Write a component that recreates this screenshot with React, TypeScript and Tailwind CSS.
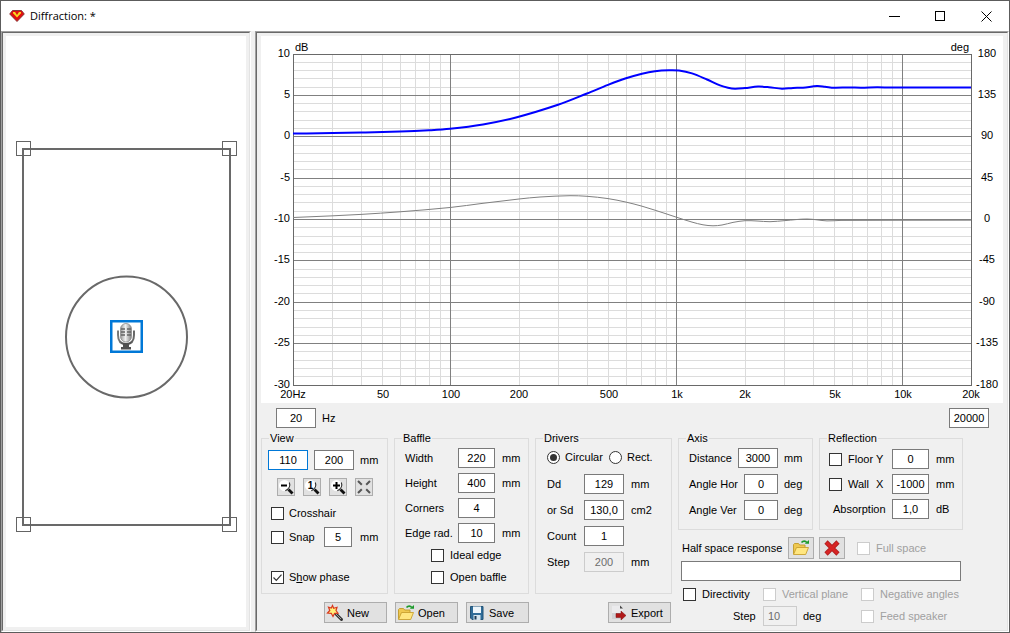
import type { ReactNode } from "react";
import clsx from "clsx";

type Point = [number, number];

const PLOT = { left: 32, right: 710, top: 18, bottom: 349 };

const LEVEL: Point[] = [
  [32, 97.5], [72, 97.1], [100, 96.6], [139, 95.6], [168, 94.3], [189, 92.8], [222, 88.4], [255, 81.5],
  [297, 68.8], [326, 57.5], [347, 48.9], [365, 42.3], [381, 37.7], [394, 35.2], [408, 34.2], [418, 34.5],
  [431, 37.4], [446, 43.5], [459, 49.4], [467, 51.8], [474, 52.7], [484, 52], [497, 50.6], [508, 51.2],
  [521, 52.7], [532, 51.9], [542, 51.7], [556, 50.1], [564, 50.7], [573, 51.7], [588, 51.4], [600, 51.7],
  [616, 51.3], [630, 51.5], [710, 51.5],
];

const PHASE: Point[] = [
  [32, 181.5], [72, 179.8], [100, 178.4], [139, 175.8], [189, 171.5], [222, 167.3], [258, 163],
  [279, 161], [309, 159.7], [326, 160.3], [347, 162.6], [365, 166.1], [381, 170.2], [394, 174.2],
  [406, 178.1], [416, 181.4], [431, 186.1], [442, 188.8], [452, 189.8], [461, 189], [472, 186.4],
  [484, 184.7], [496, 185], [509, 185.7], [524, 184.6], [546, 183], [566, 184.9], [580, 184.4], [710, 184.2],
];

const FREQ_LABELS: [number, string][] = [
  [20, "20Hz"], [50, "50"], [100, "100"], [200, "200"], [500, "500"],
  [1000, "1k"], [2000, "2k"], [5000, "5k"], [10000, "10k"], [20000, "20k"],
];

const FREQ_LINES = [
  30, 40, 50, 60, 70, 80, 90, 100, 200, 300, 400, 500, 600, 700, 800, 900,
  1000, 2000, 3000, 4000, 5000, 6000, 7000, 8000, 9000, 10000,
];

function freqX(f: number) {
  return PLOT.left + ((PLOT.right - PLOT.left) * Math.log10(f / 20)) / 3;
}

function levelY(db: number) {
  return PLOT.top + ((10 - db) * (PLOT.bottom - PLOT.top)) / 40;
}

// Catmull-Rom spline through all the points
function smooth(points: Point[]) {
  let d = `M${points[0][0]} ${points[0][1]}`;
  for (let i = 0; i < points.length - 1; i++) {
    const p0 = points[i - 1] ?? points[i];
    const p1 = points[i];
    const p2 = points[i + 1];
    const p3 = points[i + 2] ?? p2;
    const t = (p2[0] - p1[0]) / 3;
    const m1 = (p2[1] - p0[1]) / (p2[0] - p0[0]);
    const m2 = (p3[1] - p1[1]) / (p3[0] - p1[0]);
    d += `C${p1[0] + t} ${p1[1] + m1 * t} ${p2[0] - t} ${p2[1] - m2 * t} ${p2[0]} ${p2[1]}`;
  }
  return d;
}

function Chart() {
  const rows = Array.from({ length: 39 }, (_, i) => 9 - i);
  const isMajorFreq = (f: number) => f === 100 || f === 1000 || f === 10000;

  return (
    <svg viewBox="0 0 742 367" className="block w-full bg-white text-[11px]" role="img" aria-label="Diffraction response">
      <g shapeRendering="crispEdges" strokeWidth="1">
        {rows.filter((db) => db % 5 !== 0).map((db) => (
          <path key={db} d={`M${PLOT.left} ${Math.floor(levelY(db)) + 0.5}H${PLOT.right}`} stroke="#dcdcdc" />
        ))}
        {FREQ_LINES.filter((f) => !isMajorFreq(f)).map((f) => (
          <path key={f} d={`M${Math.floor(freqX(f)) + 0.5} ${PLOT.top}V${PLOT.bottom}`} stroke="#dcdcdc" />
        ))}
        {rows.filter((db) => db % 5 === 0).map((db) => (
          <path key={db} d={`M${PLOT.left} ${Math.floor(levelY(db)) + 0.5}H${PLOT.right}`} stroke="#808080" />
        ))}
        {FREQ_LINES.filter(isMajorFreq).map((f) => (
          <path key={f} d={`M${Math.floor(freqX(f)) + 0.5} ${PLOT.top}V${PLOT.bottom}`} stroke="#808080" />
        ))}
        <rect x="32.5" y="18.5" width="678" height="331" fill="none" stroke="#696969" />
      </g>

      <path d={smooth(PHASE)} fill="none" stroke="#808080" strokeWidth="1" />
      <path d={smooth(LEVEL)} fill="none" stroke="#0000ff" strokeWidth="2" />

      <g>
        <text x="34" y="15">dB</text>
        <text x="708" y="15" textAnchor="end">deg</text>
        {[10, 5, 0, -5, -10, -15, -20, -25, -30].map((db, i) => (
          <g key={db}>
            <text x="29" y={Math.floor(levelY(db)) + 3} textAnchor="end">{db}</text>
            <text x="726" y={Math.floor(levelY(db)) + 3} textAnchor="middle">{180 - i * 45}</text>
          </g>
        ))}
        {FREQ_LABELS.map(([f, label]) => (
          <text key={f} x={Math.round(freqX(f))} y="362" textAnchor="middle">{label}</text>
        ))}
      </g>
    </svg>
  );
}

function BaffleView() {
  const corners: Point[] = [[10, 105], [216, 105], [10, 481], [216, 481]];

  return (
    <svg viewBox="0 0 240 591" className="block w-full bg-white" role="img" aria-label="Baffle layout">
      <defs>
        <linearGradient id="capsule" x1="0" x2="1">
          <stop offset="0" stopColor="#989898" />
          <stop offset="0.45" stopColor="#f2f2f2" />
          <stop offset="1" stopColor="#808080" />
        </linearGradient>
        <linearGradient id="stand" x1="0" x2="1">
          <stop offset="0" stopColor="#7c7c7c" />
          <stop offset="0.5" stopColor="#3a3a3a" />
          <stop offset="1" stopColor="#6a6a6a" />
        </linearGradient>
      </defs>
      <rect x="17" y="113" width="207" height="376" fill="none" stroke="#696969" strokeWidth="2" />
      {corners.map(([x, y]) => (
        <rect key={`${x}-${y}`} x={x + 0.5} y={y + 0.5} width="14" height="14" fill="none" stroke="#646464" />
      ))}
      <circle cx="120.5" cy="301" r="60.5" fill="none" stroke="#696969" strokeWidth="2" />
      <rect x="105.25" y="285.25" width="30.5" height="30.5" fill="white" stroke="#0078d7" strokeWidth="2.5" />
      <path d="M112 294.500v4.500c0 6 3 9 8 9s8-3 8-9v-4.500" fill="none" stroke="url(#stand)" strokeWidth="2" />
      <path d="M117 307h6v4h2v2.500h-10V311h2z" fill="#505050" />
      <rect x="114.500" y="287.500" width="11" height="18.500" rx="5.500" fill="url(#capsule)" stroke="#8c8c8c" strokeWidth="0.800" />
      <path d="M115 293h4M121 293h4M115 296h4M121 296h4M115 299h4M121 299h4" stroke="#666666" strokeWidth="1.300" />
    </svg>
  );
}

function Gem() {
  return (
    <svg width="16" height="14" viewBox="0 0 16 14" aria-hidden="true">
      <path d="M3.500 1.500h9L15.300 5 8 12.500 0.700 5z" fill="#e01010" stroke="#7c3030" strokeWidth="0.900" />
      <path d="M4 3h8v1.200L9.800 6.500 8 8.500 6.200 6.500 4 4.200z" fill="#f8d820" />
      <path d="M6 3h4L8 6z" fill="#e01010" />
    </svg>
  );
}

function ZoomIcon({ mark }: { mark: "-" | "1" | "+" }) {
  return (
    <svg width="16" height="16" viewBox="0 0 16 16" aria-hidden="true">
      <circle cx="6.500" cy="6.500" r="5.500" fill="white" />
      <path d="M11.300 3.500c1.200 3 0 6.500-4 8.300" fill="none" stroke="#333333" strokeWidth="1.200" />
      <path d="M10.500 10.500l4 4" stroke="#111111" strokeWidth="2.800" />
      {mark === "-" && <path d="M3 6.500h6" stroke="black" strokeWidth="2" />}
      {mark === "+" && <path d="M3 6.500h7M6.500 3v7" stroke="black" strokeWidth="2" />}
      {mark === "1" && <text x="6.500" y="10" textAnchor="middle" fontSize="10" fontWeight="700">1</text>}
    </svg>
  );
}

function FitIcon() {
  return (
    <svg width="16" height="16" viewBox="0 0 16 16" stroke="#555555" strokeWidth="2" aria-hidden="true">
      <path d="M2 2l3.800 3.800M14 2l-3.800 3.800M2 14l3.800-3.800M14 14l-3.800-3.800" />
    </svg>
  );
}

function WandIcon() {
  return (
    <svg width="18" height="18" viewBox="0 0 18 18" aria-hidden="true">
      <path d="M9.500 9.500l6 6" stroke="#333333" strokeWidth="3" strokeLinecap="round" />
      <path d="M9.500 9.500l5.500 5.500" stroke="#a0a0a0" strokeWidth="1" />
      <path d="M6.500 1.500l1.200 2.800 3.300-1-1 3.200 2 2.600-3.400.2L7 12.500 5.300 9.300 1.500 9l2.300-2.500L2.500 3.200l2.800.9z" fill="#fff07a" stroke="#d9381e" strokeWidth="1.200" />
    </svg>
  );
}

function FolderIcon() {
  return (
    <svg width="18" height="18" viewBox="0 0 18 18" aria-hidden="true">
      <path d="M1.500 15V5.500l1-1h4l1.200 1.500H13v3" fill="#efc850" stroke="#c09a28" strokeWidth="0.900" />
      <path d="M1.500 15.500l3-7h12l-2.800 7z" fill="#ffe680" stroke="#c8a030" strokeWidth="0.900" />
      <path d="M9.500 3.500c1.500-1.800 4-1.800 5.300 0" fill="none" stroke="#1d9a2c" strokeWidth="1.600" />
      <path d="M12.800 4.800h4.200V1z" fill="#1d9a2c" />
    </svg>
  );
}

function DiskIcon() {
  return (
    <svg width="18" height="18" viewBox="-1 -1 18 18" aria-hidden="true">
      <path d="M1.500 1.500h12.500v13h-11l-1.500-1.500z" fill="#2f6c98" stroke="#235478" />
      <rect x="4" y="1.500" width="8" height="6.500" fill="#eef6fb" />
      <rect x="4.500" y="10" width="7" height="5" fill="#d5e5ee" />
      <rect x="5.500" y="11" width="2" height="3.500" fill="#1c3c58" />
    </svg>
  );
}

function ExportIcon() {
  return (
    <svg width="18" height="18" viewBox="-1 -1 18 18" aria-hidden="true">
      <path d="M1 0.500h8l3 3V14H1z" fill="#d0d0d4" />
      <path d="M1 0.500h8l3 3V8H1z" fill="#ebebed" />
      <path d="M9 0.500v3h3z" fill="#444444" />
      <path d="M5 8.500h5V6l5 4.500-5 4.500v-2.500H5z" fill="#b01818" stroke="#7c1010" strokeWidth="0.500" />
    </svg>
  );
}

function DeleteIcon() {
  return (
    <svg width="18" height="18" viewBox="0 0 18 18" aria-hidden="true">
      <path d="M3 3l12 12M15 3L3 15" stroke="#b02020" strokeWidth="4.600" />
      <path d="M3.500 3.500l11 11M14.500 3.500l-11 11" stroke="#d82424" strokeWidth="3" />
    </svg>
  );
}

function Field({ label, value, width, className, disabled }: {
  label: string;
  value: string;
  width: string;
  className?: string;
  disabled?: boolean;
}) {
  return (
    <input
      type="text"
      aria-label={label}
      defaultValue={value}
      disabled={disabled}
      className={clsx(
        "h-5 shrink-0 border text-center outline-none",
        width,
        disabled ? "border-[#cccccc] bg-[#f0f0f0] text-[#6d6d6d]" : "bg-white",
        className ?? (!disabled && "border-[#7a7a7a]"),
      )}
    />
  );
}

function Check({ children, checked, disabled, gap = "gap-[6px]" }: {
  children: ReactNode;
  checked?: boolean;
  disabled?: boolean;
  gap?: string;
}) {
  return (
    <label className={clsx("flex items-center leading-[13px] whitespace-nowrap", gap, disabled && "text-[#a0a0a0]")}>
      <span className="relative block size-[13px] shrink-0">
        <input
          type="checkbox"
          defaultChecked={checked}
          disabled={disabled}
          className="peer block size-[13px] appearance-none border border-[#333333] bg-white disabled:border-[#cccccc]"
        />
        <svg viewBox="0 0 13 13" className="pointer-events-none absolute inset-0 hidden peer-checked:block" aria-hidden="true">
          <path d="M2.500 6.500l2.800 2.800 5.200-5.600" fill="none" stroke="#333333" strokeWidth="1.200" />
        </svg>
      </span>
      <span>{children}</span>
    </label>
  );
}

function Radio({ children, checked }: { children: ReactNode; checked?: boolean }) {
  return (
    <label className="flex items-center gap-[5px] leading-[13px]">
      <span className="relative block size-[13px]">
        <input
          type="radio"
          name="shape"
          defaultChecked={checked}
          className="peer block size-[13px] appearance-none rounded-full border border-[#333333] bg-white"
        />
        <span className="pointer-events-none absolute inset-[3px] hidden rounded-full bg-[#333333] peer-checked:block" />
      </span>
      {children}
    </label>
  );
}

function Group({ title, className, children }: { title: string; className: string; children: ReactNode }) {
  return (
    <fieldset className={clsx("min-w-0 shrink-0 border border-[#dcdcdc]", className)}>
      <legend className="ml-[7px] px-px leading-[13px]">{title}</legend>
      {children}
    </fieldset>
  );
}

function ActionButton({ icon, children }: { icon: ReactNode; children: ReactNode }) {
  return (
    <button type="button" className="flex h-[21px] w-[63px] items-center gap-[3px] border border-[#adadad] bg-[#e1e1e1] pl-px">
      {icon}
      <span>{children}</span>
    </button>
  );
}

function IconButton({ label, className, children }: { label: string; className: string; children: ReactNode }) {
  return (
    <button type="button" aria-label={label} className={clsx("grid place-items-center border border-[#adadad] bg-[#e1e1e1]", className)}>
      {children}
    </button>
  );
}

function TitleBar() {
  return (
    <header className="flex h-[30px] shrink-0 items-center bg-white">
      <div className="flex flex-1 items-center gap-[5px] pl-2">
        <Gem />
        <h1 className="font-['Open_Sans',sans-serif] text-[11px]">Diffraction: *</h1>
      </div>
      <button type="button" aria-label="Minimize" className="grid h-full w-[46px] place-items-center">
        <svg width="11" height="11" viewBox="0 0 11 11" stroke="black" shapeRendering="crispEdges"><path d="M0 5.500h11" /></svg>
      </button>
      <button type="button" aria-label="Maximize" className="grid h-full w-[46px] place-items-center">
        <svg width="11" height="11" viewBox="0 0 11 11" stroke="black" fill="none" shapeRendering="crispEdges"><path d="M0.500 0.500h9v9H0.500z" /></svg>
      </button>
      <button type="button" aria-label="Close" className="grid h-full w-[46px] place-items-center">
        <svg width="11" height="11" viewBox="0 0 11 11" stroke="black"><path d="M0.500 0.500l10 10M10.500 0.500l-10 10" /></svg>
      </button>
    </header>
  );
}

function Pane({ className, children }: { className: string; children: ReactNode }) {
  return (
    <div className={clsx("flex border border-t-[#a0a0a0] border-r-white border-b-white border-l-[#a0a0a0]", className)}>
      <div className="flex min-w-0 flex-1 flex-col border border-t-[#696969] border-r-[#e3e3e3] border-b-[#e3e3e3] border-l-[#696969]">
        {children}
      </div>
    </div>
  );
}

function Controls() {
  return (
    <div className="flex gap-[6px]">
      <div className="flex shrink-0 flex-col gap-2">
        <div className="flex gap-[6px]">
          <Group title="View" className="h-[162px] w-[127px]">
            <div className="flex items-center gap-[6px] pt-[5px] pl-[6px]">
              <Field label="View width" value="110" width="w-10" className="border-[#0078d7]" />
              <Field label="View height" value="200" width="w-10" />
              <span>mm</span>
            </div>
            <div className="mt-2 flex gap-2 pl-[15px]">
              <IconButton label="Zoom out" className="size-[18px]"><ZoomIcon mark="-" /></IconButton>
              <IconButton label="Actual size" className="size-[18px]"><ZoomIcon mark="1" /></IconButton>
              <IconButton label="Zoom in" className="size-[18px]"><ZoomIcon mark="+" /></IconButton>
              <IconButton label="Fit" className="size-[18px]"><FitIcon /></IconButton>
            </div>
            <div className="mt-[11px] pl-[9px]"><Check gap="gap-[5px]">Crosshair</Check></div>
            <div className="mt-[7px] flex items-center pl-[9px]">
              <div className="w-[53px]"><Check gap="gap-[5px]">Snap</Check></div>
              <Field label="Snap step" value="5" width="w-7" />
              <span className="ml-2">mm</span>
            </div>
            <div className="mt-6 pl-[9px]"><Check gap="gap-[5px]" checked>S<u>h</u>ow phase</Check></div>
          </Group>

          <Group title="Baffle" className="h-[162px] w-[135px]">
            <div className="grid grid-cols-[53px_37px_auto] items-center gap-y-[5px] pt-[3px] pl-[10px]">
              <span>Width</span><Field label="Width" value="220" width="w-full" /><span className="ml-[7px]">mm</span>
              <span>Height</span><Field label="Height" value="400" width="w-full" /><span className="ml-[7px]">mm</span>
              <span>Corners</span><Field label="Corners" value="4" width="w-full" /><span />
              <span>Edge rad.</span><Field label="Edge radius" value="10" width="w-full" /><span className="ml-[7px]">mm</span>
            </div>
            <div className="mt-[6px] flex flex-col gap-[9px] pl-9">
              <Check>Ideal edge</Check>
              <Check>Open baffle</Check>
            </div>
          </Group>

          <Group title="Drivers" className="h-[162px] w-[137px]">
            <div className="flex pt-[6px] pl-[11px]">
              <div className="w-[62px]"><Radio checked>Circular</Radio></div>
              <Radio>Rect.</Radio>
            </div>
            <div className="mt-[10px] grid grid-cols-[37px_40px_auto] items-center gap-y-[6px] pl-[11px]">
              <span>Dd</span><Field label="Dd" value="129" width="w-full" /><span className="ml-[7px]">mm</span>
              <span>or Sd</span><Field label="Sd" value="130,0" width="w-full" /><span className="ml-[7px]">cm2</span>
              <span>Count</span><Field label="Count" value="1" width="w-full" /><span />
              <span>Step</span><Field label="Driver step" value="200" width="w-full" disabled /><span className="ml-[7px]">mm</span>
            </div>
          </Group>
        </div>

        <div className="flex items-center gap-2 pl-[63px]">
          <ActionButton icon={<WandIcon />}>New</ActionButton>
          <ActionButton icon={<FolderIcon />}>Open</ActionButton>
          <ActionButton icon={<DiskIcon />}>Save</ActionButton>
          <div className="ml-auto pr-px"><ActionButton icon={<ExportIcon />}>Export</ActionButton></div>
        </div>
      </div>

      <div className="flex w-[285px] shrink-0 flex-col">
        <div className="flex gap-[6px]">
          <Group title="Axis" className="h-[98px] w-[135px]">
            <div className="flex flex-col gap-[6px] pt-[3px] pr-[6px] pl-[10px]">
              <div className="flex items-center">
                <span className="flex-1">Distance</span><Field label="Distance" value="3000" width="w-10" /><span className="w-7 pl-[6px]">mm</span>
              </div>
              <div className="flex items-center">
                <span className="flex-1">Angle Hor</span><Field label="Angle Hor" value="0" width="w-[34px]" /><span className="w-7 pl-[6px]">deg</span>
              </div>
              <div className="flex items-center">
                <span className="flex-1">Angle Ver</span><Field label="Angle Ver" value="0" width="w-[34px]" /><span className="w-7 pl-[6px]">deg</span>
              </div>
            </div>
          </Group>

          <Group title="Reflection" className="h-[98px] w-[144px]">
            <div className="grid grid-cols-[63px_37px_auto] items-center gap-y-[5px] pt-1 pl-[9px]">
              <Check><span className="flex"><span className="w-7">Floor</span>Y</span></Check>
              <Field label="Floor Y" value="0" width="w-full" /><span className="ml-[7px]">mm</span>
              <Check><span className="flex"><span className="w-7">Wall</span>X</span></Check>
              <Field label="Wall X" value="-1000" width="w-full" /><span className="ml-[7px]">mm</span>
              <span className="pl-1">Absorption</span>
              <Field label="Absorption" value="1,0" width="w-full" /><span className="ml-[7px]">dB</span>
            </div>
          </Group>
        </div>

        <div className="mt-[7px] flex items-center pl-1">
          <span className="w-[106px]">Half space response</span>
          <IconButton label="Open response" className="h-[22px] w-[26px]"><FolderIcon /></IconButton>
          <IconButton label="Clear response" className="ml-[5px] h-[22px] w-[26px]"><DeleteIcon /></IconButton>
          <div className="ml-3"><Check disabled>Full space</Check></div>
        </div>
        <div className="mt-[2px] flex pr-[2px] pl-[3px]">
          <input type="text" aria-label="Half space response" className="h-5 w-full border border-[#7a7a7a] bg-white px-1 outline-none" />
        </div>
        <div className="mt-[7px] flex pl-[5px]">
          <div className="w-20"><Check>Directivity</Check></div>
          <div className="w-[98px]"><Check disabled>Vertical plane</Check></div>
          <Check disabled>Negative angles</Check>
        </div>
        <div className="mt-[5px] flex items-center pl-[55px]">
          <span className="w-[30px]">Step</span>
          <Field label="Directivity step" value="10" width="w-[34px]" className="border-[#cccccc] pr-3" disabled />
          <span className="w-16 pl-[6px]">deg</span>
          <Check disabled>Feed speaker</Check>
        </div>
      </div>
    </div>
  );
}

export default function App() {
  return (
    <div className="flex min-h-screen w-full flex-col border border-[#5c5c5c] bg-[#f0f0f0] font-['Liberation_Sans',Arial,sans-serif] text-[11px] leading-4 text-black">
      <TitleBar />
      <main className="flex flex-1">
        <Pane className="w-[250px] shrink-0">
          <div className="flex flex-1 flex-col p-[3px]">
            <div className="flex-1 bg-white"><BaffleView /></div>
          </div>
        </Pane>
        <Pane className="ml-1 min-w-0 flex-1">
          <div className="px-1 pt-[3px] pb-1">
            <Chart />
            <div className="flex items-center justify-between pt-[5px] pr-[14px] pb-1 pl-[15px]">
              <div className="flex items-center gap-[6px]">
                <Field label="Lowest frequency" value="20" width="w-10" />
                <span>Hz</span>
              </div>
              <Field label="Highest frequency" value="20000" width="w-10" />
            </div>
            <Controls />
          </div>
        </Pane>
      </main>
    </div>
  );
}
